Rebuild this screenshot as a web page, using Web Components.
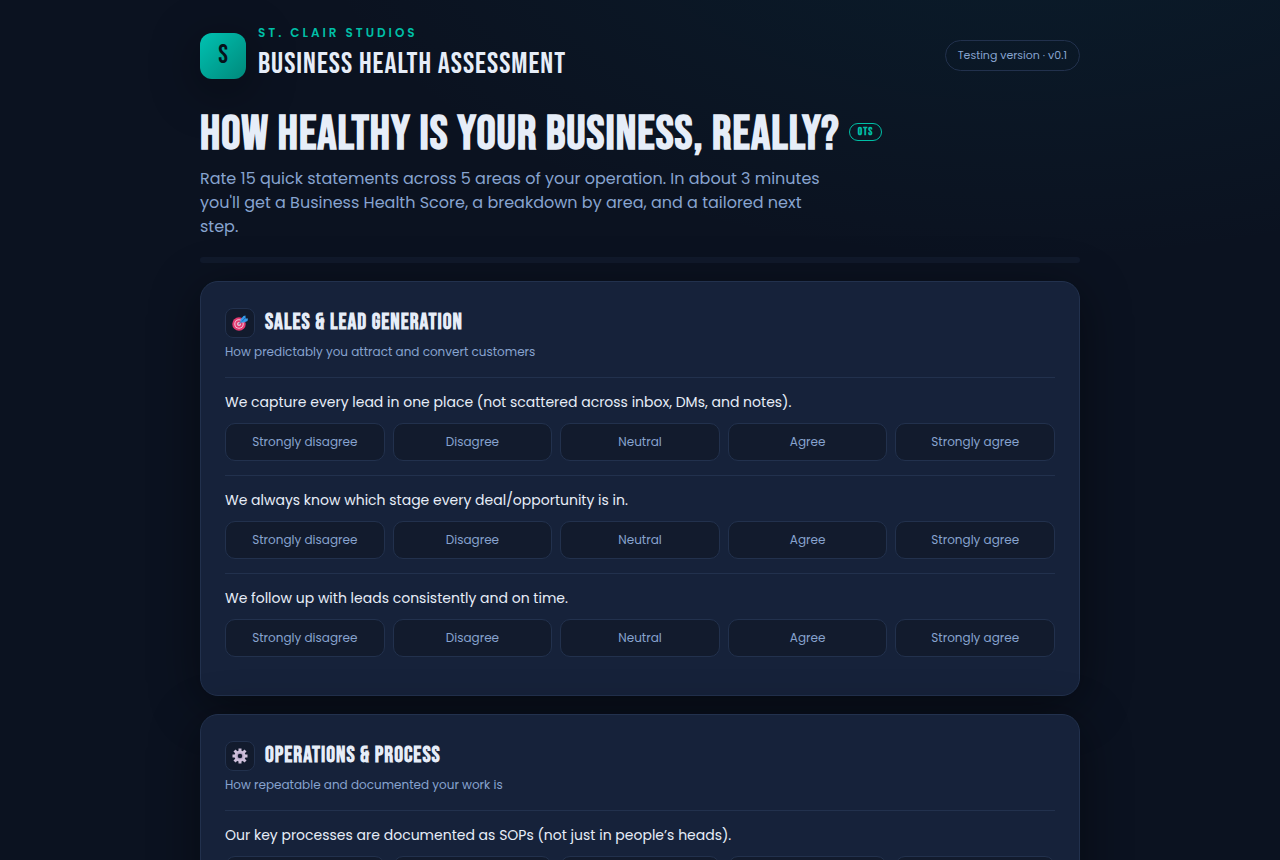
<!DOCTYPE html>
<html lang="en">
<head>
<meta charset="utf-8">
<meta name="viewport" content="width=device-width, initial-scale=1">
<title>Business Health Assessment</title>
<style>
  :root {
    --bg: #0b1220;
    --panel: #16223a;
    --inset: #121b2d;
    --line: #22314d;
    --text: #e6edf8;
    --muted: #87a3cf;
    --accent: #00bfa6;
    --body-font: Poppins, Inter, "Open Sans", sans-serif;
    --display-font: "Bebas Neue", "Roboto Condensed", sans-serif;
    --shadow: 0 10px 50px rgba(0, 0, 0, .45);
  }
  body {
    margin: 0;
    min-height: 100vh;
    color: var(--text);
    font-family: var(--body-font);
    background: radial-gradient(1200px 600px at 80% -10%, rgba(0, 120, 140, .1), transparent 60%), var(--bg);
  }
</style>
</head>
<body>
<assessment-page></assessment-page>

<script>
const define = (name, html, setup) => {
  const template = document.createElement('template');
  template.innerHTML = html;
  customElements.define(name, class extends HTMLElement {
    constructor() {
      super();
      this.attachShadow({ mode: 'open' }).append(template.content.cloneNode(true));
    }
    connectedCallback() {
      if (setup) setup(this, this.shadowRoot);
    }
  });
};

define('brand-header', `
<style>
  :host { display: block; }
  header { display: flex; align-items: center; justify-content: space-between; gap: 16px; }
  .brand { display: flex; align-items: center; gap: 12px; }
  .logo {
    width: 46px; height: 46px; border-radius: 12px; flex: none;
    display: grid; place-items: center;
    background: linear-gradient(135deg, #00c2b2, #00897b);
    color: #06121a; font: 26px/38px var(--display-font);
    box-shadow: var(--shadow);
  }
  .studio { color: var(--accent); font-size: 12px; line-height: 18px; font-weight: 600; letter-spacing: 3px; text-transform: uppercase; }
  .name { font: 30px/45px var(--display-font); letter-spacing: 1px; text-transform: uppercase; }
  .version { border: 1px solid var(--line); border-radius: 999px; padding: 6px 12px; color: var(--muted); font-size: 11px; line-height: 17px; white-space: nowrap; }
</style>
<header>
  <div class="brand">
    <div class="logo">S</div>
    <div>
      <div class="studio">St. Clair Studios</div>
      <div class="name">Business Health Assessment</div>
    </div>
  </div>
  <div class="version">Testing version · v0.1</div>
</header>`);

define('page-intro', `
<style>
  :host { display: block; }
  h1 { margin: 0; font: bold 48px/56px var(--display-font); letter-spacing: 1px; text-transform: uppercase; }
  .tag { display: inline-block; vertical-align: middle; margin-left: 9px; font-size: 11px; line-height: 16px; padding: 0 8px; border: 1px solid var(--accent); border-radius: 999px; color: var(--accent); }
  p { margin: 4px 0 0; max-width: 640px; color: var(--muted); font-size: 16px; line-height: 24px; }
</style>
<h1><slot name="title"></slot><span class="tag">OTS</span></h1>
<p><slot></slot></p>`);

define('progress-line', `
<style>
  :host { display: block; height: 6px; border-radius: 999px; background: #111a2c; overflow: hidden; }
  .fill { height: 100%; width: 0; background: var(--accent); }
</style>
<div class="fill"></div>`);

define('area-card', `
<style>
  :host { display: block; box-sizing: border-box; padding: 24px; border: 1px solid var(--line); border-radius: 18px; background: var(--panel); box-shadow: var(--shadow); }
  .head { display: flex; align-items: center; gap: 10px; height: 34px; }
  .icon { box-sizing: border-box; width: 30px; height: 30px; display: grid; place-items: center; border: 1px solid var(--line); border-radius: 8px; background: var(--inset); }
  h2 { margin: 0; font: bold 22px/32px var(--display-font); letter-spacing: 1px; text-transform: uppercase; }
  p { margin: 2px 0 15px; color: var(--muted); font-size: 12px; line-height: 20px; }
</style>
<div class="head"><span class="icon"><slot name="icon"></slot></span><h2><slot name="title"></slot></h2></div>
<p><slot name="hint"></slot></p>
<slot></slot>`);

define('likert-question', `
<style>
  :host { display: block; border-top: 1px solid var(--line); padding: 14px 0; }
  .question { font-size: 14px; line-height: 21px; }
  .scale { display: grid; grid-template-columns: repeat(5, 1fr); gap: 8px; margin-top: 10px; }
  button { height: 38px; padding: 0 8px; border: 1px solid var(--line); border-radius: 10px; background: var(--inset); color: var(--muted); font: 12px/18px var(--body-font); cursor: pointer; }
  button[aria-pressed="true"] { border-color: var(--accent); color: var(--text); }
</style>
<div class="question" id="question"><slot></slot></div>
<div class="scale" role="group" aria-labelledby="question">
  <button type="button">Strongly disagree</button>
  <button type="button">Disagree</button>
  <button type="button">Neutral</button>
  <button type="button">Agree</button>
  <button type="button">Strongly agree</button>
</div>`, (host, root) => {
  const buttons = [...root.querySelectorAll('button')];
  root.querySelector('.scale').onclick = event => {
    const picked = event.target.closest('button');
    if (picked) buttons.forEach(b => b.setAttribute('aria-pressed', b === picked));
  };
});

define('target-icon', `
<style>:host { display: block; } svg { display: block; }</style>
<svg width="16" height="16" viewBox="0 0 32 32" aria-hidden="true">
  <circle cx="14" cy="18" r="13.5" fill="#e2396f"/>
  <circle cx="14" cy="18" r="9.5" fill="#f3c4da"/>
  <circle cx="14" cy="18" r="7.4" fill="#e2396f"/>
  <circle cx="14" cy="18" r="4" fill="#f3c4da"/>
  <path d="M14 18 25 7" stroke="#7d6a9c" stroke-width="3" stroke-linecap="round"/>
  <path d="M17 9v6h7l7-3 1-5h-5V1l-4 1z" fill="#379bea"/>
  <path d="m20 13 7-8" stroke="#1667b5" stroke-width="2"/>
</svg>`);

define('gear-icon', `
<style>:host { display: block; } svg { display: block; }</style>
<svg width="16" height="16" viewBox="0 0 32 32" aria-hidden="true">
  <g stroke="#cdbfda" stroke-width="6">
    <path d="M16 1v30M1 16h30M5 5l22 22M27 5 5 27"/>
  </g>
  <circle cx="16" cy="16" r="11" fill="#cdbfda"/>
  <circle cx="16" cy="16" r="7" fill="#b5a4c6"/>
  <circle cx="16" cy="16" r="4.5" fill="#131b2e"/>
</svg>`);

define('assessment-page', `
<style>
  :host { display: block; }
  main { box-sizing: border-box; max-width: 928px; margin: 0 auto; padding: 24px 24px 48px; }
  page-intro { margin-top: 20px; }
  progress-line, area-card { margin-top: 18px; }
</style>
<main>
  <brand-header></brand-header>
  <page-intro>
    <span slot="title">How healthy is your business, really?</span>
    Rate 15 quick statements across 5 areas of your operation. In about 3 minutes you'll get a Business Health Score, a breakdown by area, and a tailored next step.
  </page-intro>
  <progress-line></progress-line>
  <area-card>
    <target-icon slot="icon"></target-icon>
    <span slot="title">Sales &amp; Lead Generation</span>
    <span slot="hint">How predictably you attract and convert customers</span>
    <likert-question>We capture every lead in one place (not scattered across inbox, DMs, and notes).</likert-question>
    <likert-question>We always know which stage every deal/opportunity is in.</likert-question>
    <likert-question>We follow up with leads consistently and on time.</likert-question>
  </area-card>
  <area-card>
    <gear-icon slot="icon"></gear-icon>
    <span slot="title">Operations &amp; Process</span>
    <span slot="hint">How repeatable and documented your work is</span>
    <likert-question>Our key processes are documented as SOPs (not just in people’s heads).</likert-question>
  </area-card>
</main>`);
</script>
</body>
</html>
